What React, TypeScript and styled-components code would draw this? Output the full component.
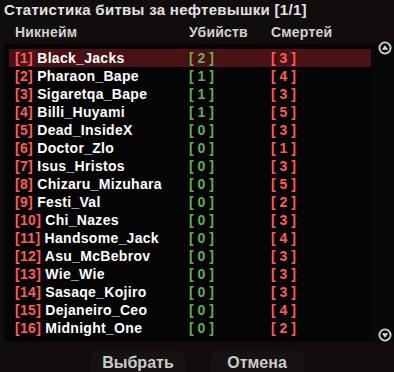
import React from "react";
import styled, { createGlobalStyle } from "styled-components";

const GlobalStyle = createGlobalStyle`
  html, body {
    margin: 0;
    padding: 0;
    background: #120d0d;
  }
  body {
    font-family: "Liberation Sans", Arial, sans-serif;
  }
`;

const Window = styled.div`
  width: 394px;
  height: 372px;
  background: #120d0d;
  display: flex;
  flex-direction: column;
  overflow: hidden;
  box-sizing: border-box;
`;

const Title = styled.div`
  height: 20px;
  line-height: 20px;
  padding-left: 4px;
  color: #e2e2e2;
  font-size: 15px;
  font-weight: bold;
  letter-spacing: 0.3px;
`;

const HeaderRow = styled.div`
  display: grid;
  grid-template-columns: 174px 82px 1fr;
  height: 24px;
  line-height: 24px;
  padding-left: 15px;
  color: #d0d0d0;
  font-size: 14px;
  font-weight: bold;
  letter-spacing: 0.2px;
`;

const Body = styled.div`
  display: flex;
  height: 298px;
`;

const ListPanel = styled.div`
  margin-left: 4px;
  width: 369px;
  height: 298px;
  background: #050505;
  border-radius: 4px;
  padding: 5px 2px 0 5px;
  box-sizing: border-box;
`;

const Row = styled.div<{ $selected?: boolean }>`
  display: grid;
  grid-template-columns: 174px 82px 1fr;
  height: 18px;
  line-height: 18px;
  padding-left: 6px;
  background: ${({ $selected }) => ($selected ? "#4b1215" : "transparent")};
  font-size: 14px;
  font-weight: bold;
  letter-spacing: 0.3px;
  white-space: nowrap;
`;

const Index = styled.span`
  color: #ff5a5a;
`;

const Name = styled.span`
  color: #ffffff;
`;

const Kills = styled.span`
  color: #66ac55;
  letter-spacing: 0;
`;

const Deaths = styled.span`
  color: #ff5a5a;
  letter-spacing: 0;
`;

const Scroll = styled.div`
  flex: 1;
  display: flex;
  flex-direction: column;
  justify-content: space-between;
  align-items: center;
  padding: 0 0 0 3px;
  margin-top: -3px;
  background: #090808;
`;

const Footer = styled.div`
  display: flex;
  gap: 24px;
  padding: 8px 0 0 90px;
`;

const Button = styled.div<{ $w: number }>`
  width: ${({ $w }) => $w}px;
  height: 30px;
  border-radius: 9px 9px 0 0;
  background: #161212;
  color: #cacaca;
  font-size: 16px;
  font-weight: bold;
  text-align: center;
  line-height: 26px;
`;

const Arrow = ({ down }: { down?: boolean }) => (
  <svg width="14" height="14" viewBox="0 0 14 14">
    <circle cx="7" cy="7" r="5.6" fill="none" stroke="#d8d8d8" strokeWidth="1.8" />
    <polygon
      points={down ? "3.8,5.2 10.2,5.2 7,9.8" : "3.8,8.8 10.2,8.8 7,4.2"}
      fill="#d8d8d8"
    />
  </svg>
);

const players = [
  ["Black_Jacks", 2, 3],
  ["Pharaon_Bape", 1, 4],
  ["Sigaretqa_Bape", 1, 3],
  ["Billi_Huyami", 1, 5],
  ["Dead_InsideX", 0, 3],
  ["Doctor_Zlo", 0, 1],
  ["Isus_Hristos", 0, 3],
  ["Chizaru_Mizuhara", 0, 5],
  ["Festi_Val", 0, 2],
  ["Chi_Nazes", 0, 3],
  ["Handsome_Jack", 0, 4],
  ["Asu_McBebrov", 0, 3],
  ["Wie_Wie", 0, 3],
  ["Sasaqe_Kojiro", 0, 3],
  ["Dejaneiro_Ceo", 0, 4],
  ["Midnight_One", 0, 2],
] as const;

export default function App() {
  return (
    <>
      <GlobalStyle />
      <Window>
        <Title>Статистика битвы за нефтевышки [1/1]</Title>
        <HeaderRow>
          <span>Никнейм</span>
          <span>Убийств</span>
          <span>Смертей</span>
        </HeaderRow>
        <Body>
          <ListPanel>
            {players.map(([name, kills, deaths], i) => (
              <Row key={name} $selected={i === 0}>
                <span>
                  <Index>[{i + 1}]</Index> <Name>{name}</Name>
                </span>
                <Kills>[ {kills} ]</Kills>
                <Deaths>[ {deaths} ]</Deaths>
              </Row>
            ))}
          </ListPanel>
          <Scroll>
            <Arrow />
            <Arrow down />
          </Scroll>
        </Body>
        <Footer>
          <Button $w={96}>Выбрать</Button>
          <Button $w={94}>Отмена</Button>
        </Footer>
      </Window>
    </>
  );
}
